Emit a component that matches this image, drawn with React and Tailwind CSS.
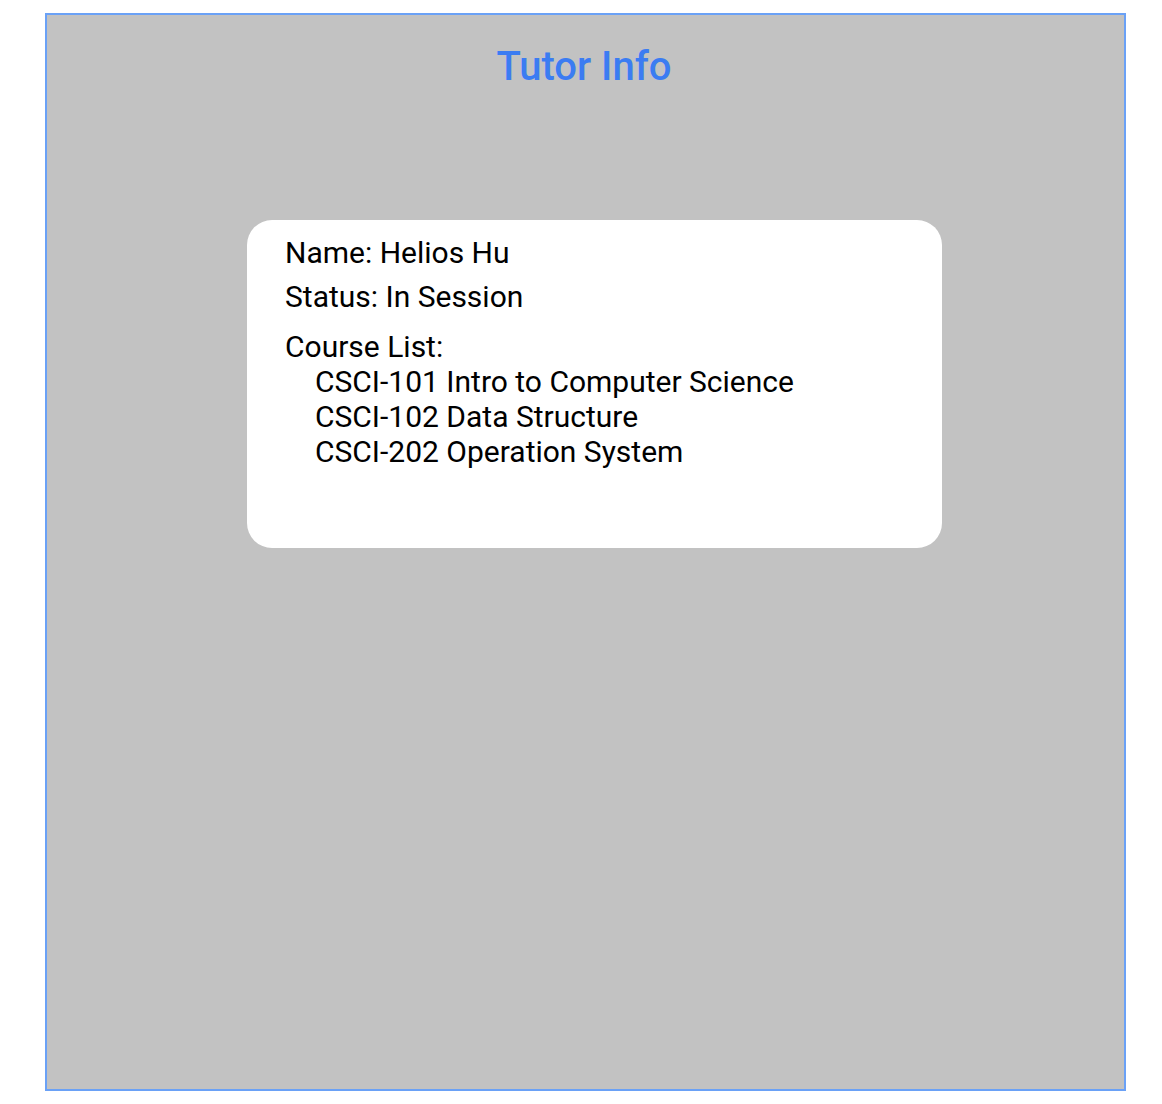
import React from "react";

const courses = [
  "CSCI-101 Intro to Computer Science",
  "CSCI-102 Data Structure",
  "CSCI-202 Operation System",
];

export default function App() {
  return (
    <div className="min-h-screen bg-white pt-[13px] pl-[45px]" style={{ fontFamily: "Roboto, sans-serif" }}>
      <div className="w-[1081px] h-[1078px] border-2 border-[#6aa1f6] bg-[#c2c2c2]">
        <h1 className="text-center text-[40px] font-medium text-[#3b7cf2] leading-none mt-[32px] pr-[3px]">
          Tutor Info
        </h1>
        <div className="ml-[200px] mt-[133px] w-[695px] h-[328px] rounded-[25px] bg-white px-[38px] pt-[15px] text-[30px] leading-[35px] text-black">
          <p>Name: Helios Hu</p>
          <p className="mt-[9px]">Status: In Session</p>
          <p className="mt-[15px]">Course List:</p>
          <ul className="pl-[30px]">
            {courses.map((c) => (
              <li key={c}>{c}</li>
            ))}
          </ul>
        </div>
      </div>
    </div>
  );
}
